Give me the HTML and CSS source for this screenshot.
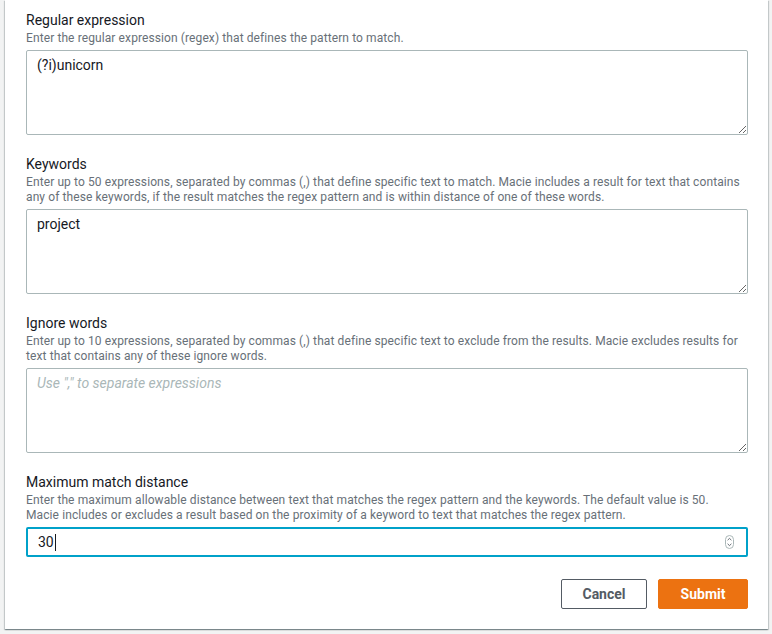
FILE: index.html
```html
<!DOCTYPE html>
<html>
<head>
<meta charset="utf-8">
<link rel="stylesheet" href="styles.css">
</head>
<body>
<div class="panel">
  <div class="field">
    <div class="label">Regular expression</div>
    <div class="desc">Enter the regular expression (regex) that defines the pattern to match.</div>
    <textarea class="area">(?i)unicorn</textarea>
  </div>
  <div class="field">
    <div class="label">Keywords</div>
    <div class="desc">Enter up to 50 expressions, separated by commas (,) that define specific text to match. Macie includes a result for text that contains any of these keywords, if the result matches the regex pattern and is within distance of one of these words.</div>
    <textarea class="area">project</textarea>
  </div>
  <div class="field">
    <div class="label">Ignore words</div>
    <div class="desc">Enter up to 10 expressions, separated by commas (,) that define specific text to exclude from the results. Macie excludes results for text that contains any of these ignore words.</div>
    <textarea class="area" placeholder="Use &quot;,&quot; to separate expressions"></textarea>
  </div>
  <div class="field">
    <div class="label">Maximum match distance</div>
    <div class="desc">Enter the maximum allowable distance between text that matches the regex pattern and the keywords. The default value is 50. Macie includes or excludes a result based on the proximity of a keyword to text that matches the regex pattern.</div>
    <div class="num">
      <span class="value">30</span><span class="caret"></span>
      <svg class="spin" width="9" height="14" viewBox="0 0 9 14">
        <rect x="0.5" y="0.5" width="8" height="13" rx="4" fill="#fff" stroke="#aab7b8"/>
        <path d="M2.6 5.2 L4.5 3.4 L6.4 5.2" fill="none" stroke="#545b64" stroke-width="0.9"/>
        <path d="M2.6 8.8 L4.5 10.6 L6.4 8.8" fill="none" stroke="#545b64" stroke-width="0.9"/>
      </svg>
    </div>
  </div>
  <div class="actions">
    <button class="btn cancel">Cancel</button>
    <button class="btn submit">Submit</button>
  </div>
</div>
</body>
</html>
```
FILE: styles.css
```css
html, body {
  margin: 0;
  padding: 0;
}
body {
  background: #f2f3f3;
  width: 772px;
  height: 634px;
  overflow: hidden;
  font-family: Roboto, "Liberation Sans", sans-serif;
  color: #16191f;
}
.panel {
  margin-left: 5px;
  width: 763px;
  box-sizing: border-box;
  background: #fff;
  box-shadow: 0 1px 1px 0 rgba(0,28,36,0.3), 1px 1px 1px 0 rgba(0,28,36,0.15), -1px 1px 1px 0 rgba(0,28,36,0.15);
  padding: 10px 20px 20px 21px;
}
.field {
  margin-bottom: 19px;
}
.label {
  font-size: 14px;
  line-height: 20px;
  color: #16191f;
}
.desc {
  font-size: 12px;
  line-height: 15px;
  letter-spacing: 0.1px;
  color: #687078;
  margin-top: 1px;
  max-width: 717px;
}
.area {
  display: block;
  box-sizing: border-box;
  width: 722px;
  height: 85px;
  margin-top: 4px;
  border: 1px solid #aab7b8;
  border-radius: 2px;
  padding: 3px 10px;
  font-family: Roboto, "Liberation Sans", sans-serif;
  font-size: 14px;
  line-height: 22px;
  color: #16191f;
  resize: vertical;
  outline: none;
}
.area::placeholder {
  color: #aab7b8;
  font-style: italic;
}
.num {
  display: flex;
  align-items: center;
  box-sizing: border-box;
  width: 722px;
  height: 30px;
  margin-top: 4px;
  border: 2px solid #00a1c9;
  border-radius: 2px;
  padding: 0 12px 0 10px;
  font-size: 14px;
}
.value {
  line-height: 20px;
}
.caret {
  width: 1px;
  height: 17px;
  background: #16191f;
  margin-left: 1px;
}
.spin {
  margin-left: auto;
  display: block;
}
.actions {
  display: flex;
  justify-content: flex-end;
  gap: 11px;
  margin-top: 22px;
}
.btn {
  box-sizing: border-box;
  height: 30px;
  border-radius: 2px;
  font-family: Roboto, "Liberation Sans", sans-serif;
  font-size: 14px;
  font-weight: 700;
  padding: 0 20px;
  cursor: pointer;
}
.cancel {
  width: 86px;
  background: #fff;
  color: #545b64;
  border: 1px solid #545b64;
}
.submit {
  width: 90px;
  background: #ec7211;
  color: #fff;
  border: 1px solid #ec7211;
}
```
